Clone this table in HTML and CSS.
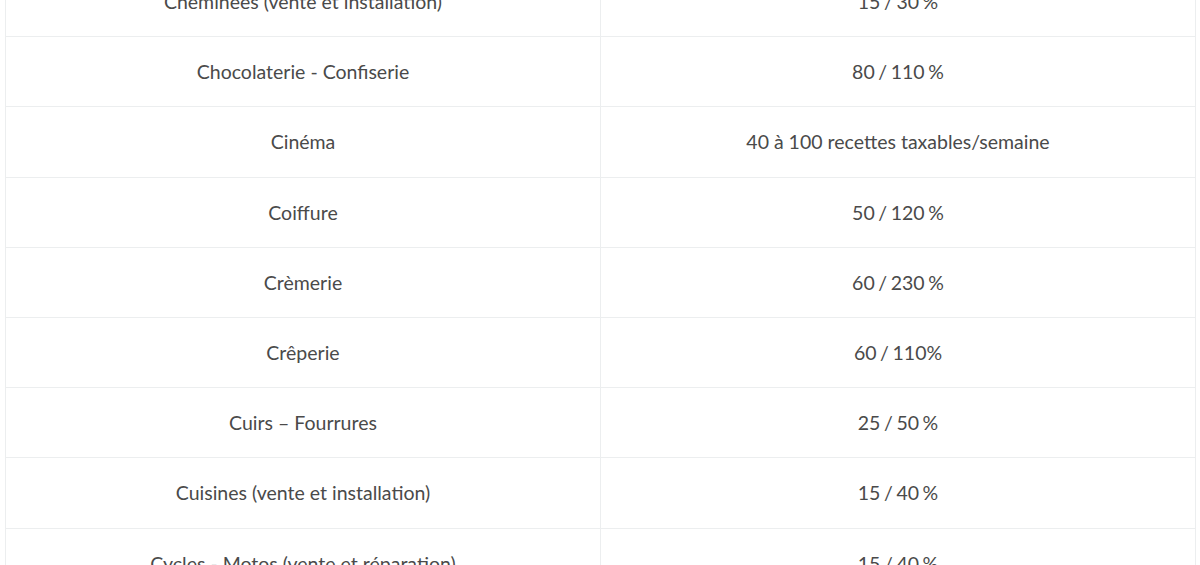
FILE: index.html
```html
<!DOCTYPE html>
<html lang="fr">

<head>
    <meta charset="UTF-8">
    <meta name="viewport" content="width=device-width, initial-scale=1.0">
    <title>Coefficients par activité</title>
    <link rel="stylesheet" href="styles.css">
</head>

<body>
    <div class="table-wrap">
        <table class="coef-table">
            <colgroup>
                <col class="col-half">
                <col class="col-half">
            </colgroup>
            <tbody>
                <tr>
                    <td>Cheminées (vente et installation)</td>
                    <td class="rate">15 / 30 %</td>
                </tr>
                <tr>
                    <td>Chocolaterie - Confiserie</td>
                    <td class="rate">80 / 110 %</td>
                </tr>
                <tr>
                    <td>Cinéma</td>
                    <td>40 à 100 recettes taxables/semaine</td>
                </tr>
                <tr>
                    <td>Coiffure</td>
                    <td class="rate">50 / 120 %</td>
                </tr>
                <tr>
                    <td>Crèmerie</td>
                    <td class="rate">60 / 230 %</td>
                </tr>
                <tr>
                    <td>Crêperie</td>
                    <td class="rate">60 / 110%</td>
                </tr>
                <tr>
                    <td>Cuirs – Fourrures</td>
                    <td class="rate">25 / 50 %</td>
                </tr>
                <tr>
                    <td>Cuisines (vente et installation)</td>
                    <td class="rate">15 / 40 %</td>
                </tr>
                <tr>
                    <td>Cycles - Motos (vente et réparation)</td>
                    <td class="rate">15 / 40 %</td>
                </tr>
            </tbody>
        </table>
    </div>
</body>

</html>
```

FILE: styles.css
```css
* {
    margin: 0;
    padding: 0;
    box-sizing: border-box;
}

body {
    font-family: Lato, "Open Sans", sans-serif;
    background-color: #fff;
    color: #4a4a4a;
    overflow: hidden;
}

.table-wrap {
    margin: -34px 4px 0 5px;
}

.coef-table {
    width: 100%;
    table-layout: fixed;
    border-collapse: collapse;
}

.col-half {
    width: 50%;
}

.coef-table td {
    border: 1px solid #eceeef;
    padding: 20px 10px;
    font-size: 19.5px;
    line-height: 29.2px;
    text-align: center;
    vertical-align: middle;
}

/* espaces fines autour du slash et du % */
.coef-table td.rate {
    word-spacing: -1.4px;
}
```
